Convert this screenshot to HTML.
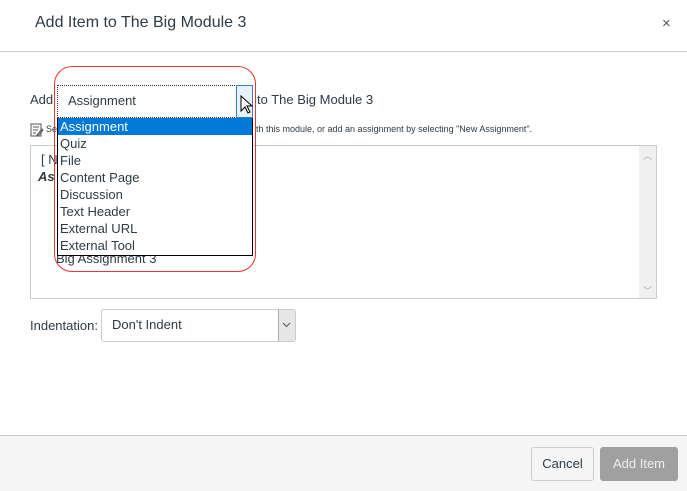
<!DOCTYPE html>
<html><head><style>
*{box-sizing:border-box;margin:0;padding:0}
body{width:687px;height:491px;position:relative;background:#fff;font-family:"Liberation Sans",sans-serif;color:#2d3b45;overflow:hidden}
.a{position:absolute;white-space:nowrap}
</style></head><body>
<div class="a" style="left:35px;top:14px;font-size:16px;color:#2d3b45">Add Item to The Big Module 3</div>
<div class="a" style="left:662px;top:15px;font-size:15px;color:#555">×</div>
<div class="a" style="left:0;top:51px;width:687px;height:1px;background:#c7cdd1"></div>

<div class="a" style="left:30px;top:92px;font-size:13px">Add</div>
<div class="a" style="left:257px;top:92px;font-size:13px">to The Big Module 3</div>
<svg class="a" style="left:30px;top:123px" width="14" height="14" viewBox="0 0 14 14"><rect x="1" y="1" width="10" height="12" fill="none" stroke="#555"/><path d="M3 4h6M3 7h5M3 10h3M7 12l5-6 1 1-5 6z" stroke="#555" fill="none"/></svg>
<div class="a" style="left:46px;top:124px;font-size:9px">Se</div>
<div class="a" style="left:256px;top:124px;font-size:9px">th this module, or add an assignment by selecting "New Assignment".</div>

<div class="a" style="left:30px;top:145px;width:627px;height:154px;border:1px solid #ccc"></div>
<div class="a" style="left:639px;top:146px;width:17px;height:152px;background:#f0f0f0"></div>
<div class="a" style="left:643px;top:149px;font-size:9px;color:#aaa">︿</div>
<div class="a" style="left:643px;top:284px;font-size:9px;color:#aaa">﹀</div>
<div class="a" style="left:41px;top:152px;font-size:13px">[ N</div>
<div class="a" style="left:38px;top:169px;font-size:13px;font-weight:bold;font-style:italic">As</div>
<div class="a" style="left:56px;top:251px;font-size:13px">Big Assignment 3</div>

<div class="a" style="left:54px;top:66px;width:202px;height:206px;border:1px solid #e33;border-radius:18px"></div>
<div class="a" style="left:57px;top:85px;width:196px;height:33px;border:1px dotted #333;background:#fff"></div>
<div class="a" style="left:68px;top:93px;font-size:13px">Assignment</div>
<div class="a" style="left:236px;top:85px;width:17px;height:33px;background:#e5f1fb;border:1px solid #3c7fb1"></div>
<svg class="a" style="left:240px;top:95px" width="14" height="22" viewBox="0 0 14 22"><path d="M1 1v15l4-4 3 6 2-1-3-6h5z" fill="#fff" stroke="#000"/></svg>
<div class="a" style="left:57px;top:118px;width:196px;height:138px;border:1px solid #000;background:#fff;font-size:13px;line-height:17px;color:#2d3b45">
<div style="background:#0078d7;color:#fff;padding-left:2px;margin-top:-1px">Assignment</div>
<div style="padding-left:2px">Quiz</div>
<div style="padding-left:2px">File</div>
<div style="padding-left:2px">Content Page</div>
<div style="padding-left:2px">Discussion</div>
<div style="padding-left:2px">Text Header</div>
<div style="padding-left:2px">External URL</div>
<div style="padding-left:2px">External Tool</div>
</div>

<div class="a" style="left:30px;top:318px;font-size:13px">Indentation:</div>
<div class="a" style="left:101px;top:309px;width:195px;height:33px;border:1px solid #c7cdd1;border-radius:3px"></div>
<div class="a" style="left:112px;top:317px;font-size:13px">Don't Indent</div>
<div class="a" style="left:278px;top:310px;width:17px;height:31px;background:#e6e6e6;border-left:1px solid #aaa"></div>
<svg class="a" style="left:282px;top:322px" width="9" height="6"><path d="M1 1l3.5 3.5L8 1" stroke="#555" fill="none"/></svg>

<div class="a" style="left:0;top:435px;width:687px;height:56px;background:#f5f5f5;border-top:1px solid #c7cdd1"></div>
<div class="a" style="left:531px;top:447px;width:63px;height:34px;border:1px solid #c7cdd1;border-radius:3px;background:#f5f5f5;font-size:13px;text-align:center;line-height:32px">Cancel</div>
<div class="a" style="left:600px;top:447px;width:78px;height:34px;border-radius:3px;background:#a0a0a0;color:#eee;font-size:13px;text-align:center;line-height:34px">Add Item</div>
</body></html>
